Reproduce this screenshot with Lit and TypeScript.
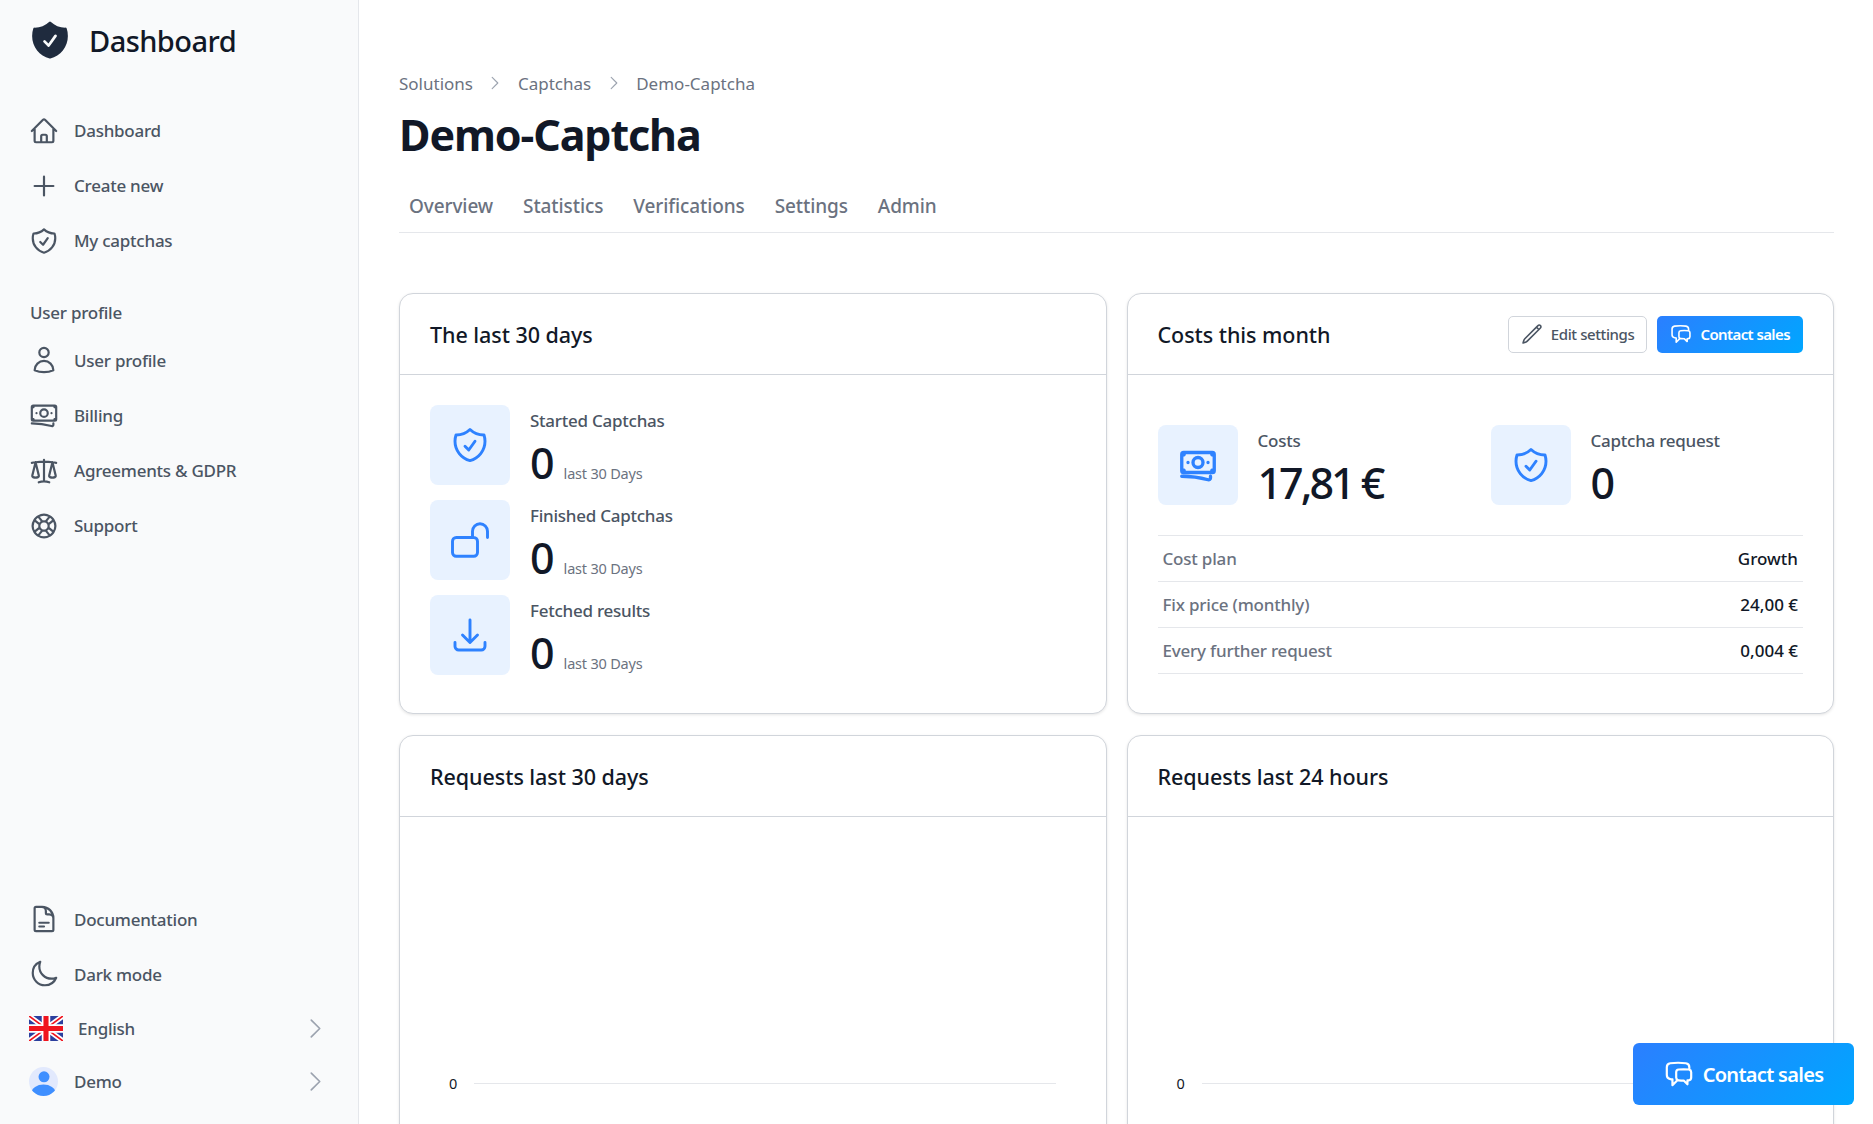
import { LitElement, html, css, svg } from "lit";
import { customElement } from "lit/decorators.js";

const P = {
  home: "M2.25 12l8.954-8.955c.44-.439 1.152-.439 1.591 0L21.75 12M4.5 9.75v10.125c0 .621.504 1.125 1.125 1.125H9.75v-4.875c0-.621.504-1.125 1.125-1.125h2.25c.621 0 1.125.504 1.125 1.125V21h4.125c.621 0 1.125-.504 1.125-1.125V9.75M8.25 21h8.25",
  plus: "M12 4.5v15m7.5-7.5h-15",
  shield: "M9 12.75L11.25 15 15 9.75m-3-7.036A11.959 11.959 0 013.598 6 11.99 11.99 0 003 9.749c0 5.592 3.824 10.29 9 11.623 5.176-1.332 9-6.03 9-11.622 0-1.31-.21-2.571-.598-3.751h-.152c-3.196 0-6.1-1.248-8.25-3.285z",
  user: "M15.75 6a3.75 3.75 0 11-7.5 0 3.75 3.75 0 017.5 0zM4.501 20.118a7.5 7.5 0 0114.998 0A17.933 17.933 0 0112 21.75c-2.676 0-5.216-.584-7.499-1.632z",
  bank: "M2.25 18.75a60.07 60.07 0 0115.797 2.101c.727.198 1.453-.342 1.453-1.096V18.75M3.75 4.5v.75A.75.75 0 013 6h-.75m0 0v-.375c0-.621.504-1.125 1.125-1.125H20.25M2.25 6v9m18-10.5v.75c0 .414.336.75.75.75h.75m-1.5-1.5h.375c.621 0 1.125.504 1.125 1.125v9.75c0 .621-.504 1.125-1.125 1.125h-.375m1.5-1.5H21a.75.75 0 00-.75.75v.75m0 0H3.75m0 0h-.375a1.125 1.125 0 01-1.125-1.125V15m1.5 1.5v-.75A.75.75 0 003 15h-.75M15 10.5a3 3 0 11-6 0 3 3 0 016 0zm3 0h.008v.008H18V10.5zm-12 0h.008v.008H6V10.5z",
  scale: "M12 3v17.25m0 0c-1.472 0-2.882.265-4.185.75M12 20.25c1.472 0 2.882.265 4.185.75M18.75 4.97A48.416 48.416 0 0012 4.5c-2.291 0-4.545.16-6.75.47m13.5 0c1.01.143 2.01.317 3 .52m-3-.52l2.62 10.726c.122.499-.106 1.028-.589 1.202a5.988 5.988 0 01-2.031.352 5.988 5.988 0 01-2.031-.352c-.483-.174-.711-.703-.59-1.202L18.75 4.97zm-16.5.52c.99-.203 1.99-.377 3-.52m0 0l2.62 10.726c.122.499-.106 1.028-.589 1.202a5.989 5.989 0 01-2.031.352 5.989 5.989 0 01-2.031-.352c-.483-.174-.711-.703-.59-1.202L5.25 4.97z",
  buoy: "M16.712 4.33a9.027 9.027 0 011.652 1.306c.51.51.944 1.064 1.306 1.652M16.712 4.33l-3.448 4.138m3.448-4.138a9.014 9.014 0 00-9.424 0M19.67 7.288l-4.138 3.448m4.138-3.448a9.014 9.014 0 010 9.424m-4.138-5.976a3.736 3.736 0 00-.88-1.388 3.737 3.737 0 00-1.388-.88m2.268 2.268a3.765 3.765 0 010 2.528m-2.268-4.796a3.765 3.765 0 00-2.528 0m4.796 4.796c-.181.506-.475.982-.88 1.388a3.736 3.736 0 01-1.388.88m2.268-2.268l4.138 3.448m0 0a9.027 9.027 0 01-1.306 1.652c-.51.51-1.064.944-1.652 1.306m0 0l-3.448-4.138m3.448 4.138a9.014 9.014 0 01-9.424 0m5.976-4.138a3.765 3.765 0 01-2.528 0m0 0a3.736 3.736 0 01-1.388-.88 3.737 3.737 0 01-.88-1.388m2.268 2.268L7.288 19.67m0 0a9.024 9.024 0 01-1.652-1.306 9.027 9.027 0 01-1.306-1.652m0 0l4.138-3.448M4.33 16.712a9.014 9.014 0 010-9.424m4.138 5.976a3.765 3.765 0 010-2.528m0 0c.181-.506.475-.982.88-1.388a3.736 3.736 0 011.388-.88m-2.268 2.268L4.33 7.288m6.406 1.18L7.288 4.33m0 0a9.024 9.024 0 00-1.652 1.306A9.025 9.025 0 004.33 7.288",
  doc: "M19.5 14.25v-2.625a3.375 3.375 0 00-3.375-3.375h-1.5A1.125 1.125 0 0113.5 7.125v-1.5a3.375 3.375 0 00-3.375-3.375H8.25m0 12.75h7.5m-7.5 3H12M10.5 2.25H5.625c-.621 0-1.125.504-1.125 1.125v17.25c0 .621.504 1.125 1.125 1.125h12.75c.621 0 1.125-.504 1.125-1.125V11.25a9 9 0 00-9-9z",
  moon: "M21.752 15.002A9.718 9.718 0 0118 15.75c-5.385 0-9.75-4.365-9.75-9.75 0-1.33.266-2.597.748-3.752A9.753 9.753 0 003 11.25C3 16.635 7.365 21 12.75 21a9.753 9.753 0 009.002-5.998z",
  lock: "M13.5 10.5V6.75a4.5 4.5 0 119 0v3.75M3.75 21.75h10.5a2.25 2.25 0 002.25-2.25v-6.75a2.25 2.25 0 00-2.25-2.25H3.75a2.25 2.25 0 00-2.25 2.25v6.75a2.25 2.25 0 002.25 2.25z",
  tray: "M3 16.5v2.25A2.25 2.25 0 005.25 21h13.5A2.25 2.25 0 0021 18.75V16.5M16.5 12L12 16.5m0 0L7.5 12m4.5 4.5V3",
  pencil: "M16.862 4.487l1.687-1.688a1.875 1.875 0 112.652 2.652L6.832 19.82a4.5 4.5 0 01-1.897 1.13l-2.685.8.8-2.685a4.5 4.5 0 011.13-1.897L16.863 4.487zm0 0L19.5 7.125",
  chat: "M20.25 8.511c.884.284 1.5 1.128 1.5 2.097v4.286c0 1.136-.847 2.1-1.98 2.193-.34.027-.68.052-1.02.072v3.091l-3-3c-1.354 0-2.694-.055-4.02-.163a2.115 2.115 0 01-.825-.242m9.345-8.334a2.126 2.126 0 00-.476-.095 48.64 48.64 0 00-8.048 0c-1.131.094-1.976 1.057-1.976 2.192v4.286c0 .837.46 1.58 1.155 1.951m9.345-8.334V6.637c0-1.621-1.152-3.026-2.76-3.235A48.455 48.455 0 0011.25 3c-2.115 0-4.198.137-6.24.402-1.608.209-2.76 1.614-2.76 3.235v6.226c0 1.621 1.152 3.026 2.76 3.235.577.075 1.157.14 1.74.194V21l4.155-4.155",
  chev: "M8.25 4.5l7.5 7.5-7.5 7.5",
};

const icon = (d: string, cls = "") => html`<svg class="ic ${cls}" viewBox="0 0 24 24" fill="none" stroke="currentColor" stroke-width="1.5" stroke-linecap="round" stroke-linejoin="round"><path d=${d}></path></svg>`;

const flag = html`<svg class="flag" viewBox="0 0 60 44" preserveAspectRatio="none">
  <rect width="60" height="44" fill="#2b3f9e"></rect>
  <path d="M0 0L60 44M60 0L0 44" stroke="#fff" stroke-width="9"></path>
  <path d="M0 0L60 44M60 0L0 44" stroke="#f0141e" stroke-width="3"></path>
  <path d="M30 0V44M0 22H60" stroke="#fff" stroke-width="15"></path>
  <path d="M30 0V44M0 22H60" stroke="#f0141e" stroke-width="9"></path>
</svg>`;

const avatar = html`<svg class="avatar" viewBox="0 0 28 28">
  <defs><clipPath id="av"><circle cx="14" cy="14" r="14"></circle></clipPath></defs>
  <circle cx="14" cy="14" r="14" fill="#e2e9fd"></circle>
  <g clip-path="url(#av)" fill="#3f8fff"><circle cx="14.5" cy="9.5" r="5.3"></circle><ellipse cx="14" cy="24.5" rx="11.5" ry="7.5"></ellipse></g>
</svg>`;

const SOLID_SHIELD = svg`<path fill-rule="evenodd" clip-rule="evenodd" d="M12.516 2.17a.75.75 0 00-1.032 0 11.209 11.209 0 01-7.877 3.08.75.75 0 00-.722.515A12.74 12.74 0 002.25 9.75c0 5.942 4.064 10.933 9.563 12.348a.749.749 0 00.374 0c5.499-1.415 9.563-6.406 9.563-12.348 0-1.39-.223-2.73-.635-3.985a.75.75 0 00-.722-.516l-.143.001c-2.996 0-5.717-1.17-7.734-3.08zm3.094 8.016a.75.75 0 10-1.22-.872l-3.236 4.53L9.53 12.22a.75.75 0 00-1.06 1.06l2.25 2.25a.75.75 0 001.14-.094l3.75-5.25z"></path>`;

@customElement("app-root")
export class AppRoot extends LitElement {
  static styles = css`
    :host { display: flex; height: 1124px; overflow: hidden; background: #fff; font-family: "Noto Sans", "Open Sans", sans-serif; color: #4b5563; position: relative; }
    * { box-sizing: border-box; }
    .ic { display: block; flex: none; width: 30px; height: 30px; stroke-width: 1.75; }
    aside { flex: none; width: 359px; height: 100%; background: #f9fafb; border-right: 1px solid #e5e7eb; display: flex; flex-direction: column; padding-bottom: 16px; }
    .brand { display: flex; align-items: center; gap: 17px; padding: 6px 0 0 28px; height: 82px; margin-bottom: 21px; font-size: 29px; font-weight: 500; color: #111827; letter-spacing: -0.55px; }
    .brand svg { width: 44px; height: 44px; flex: none; fill: #1f2b3e; margin-top: -8px; }
    .brand span { margin-top: -8px; }
    .nav { display: flex; align-items: center; gap: 15px; height: 55.2px; padding-left: 29px; font-size: 17px; font-weight: 500; letter-spacing: -0.25px; }
    .label { font-size: 17px; font-weight: 500; letter-spacing: -0.25px; padding: 31px 0 0 30px; height: 72px; margin-bottom: -8px; line-height: 26px; }
    .spacer { flex: 1; }
    .foot { display: flex; align-items: center; height: 53px; padding-left: 29px; padding-right: 29px; font-size: 17px; font-weight: 500; letter-spacing: -0.25px; }
    .foot .ic { width: 27px; height: 27px; color: #9ca3af; margin-left: auto; stroke-width: 1.5; }
    .flag { width: 34px; height: 25px; flex: none; margin-right: 15px; }
    .avatar { width: 29px; height: 29px; flex: none; margin-right: 16px; }
    main { flex: 1; min-width: 0; padding: 69px 39px 0 40px; }
    .crumbs { display: flex; align-items: center; height: 28px; font-size: 17px; color: #6b7280; letter-spacing: 0; }
    .crumbs .ic { width: 18px; height: 18px; margin: 0 13.5px; color: #9ca3af; stroke-width: 1.5; }
    h1 { margin: 0; height: 74px; display: flex; align-items: center; font-size: 43px; font-weight: 700; color: #111827; letter-spacing: -1.1px; }
    .tabs { display: flex; gap: 30px; height: 53px; margin-top: 9px; padding: 0 10px; border-bottom: 1px solid #e5e7eb; margin-bottom: 60px; align-items: center; font-size: 19px; font-weight: 500; color: #6b7280; letter-spacing: -0.1px; }
    .grid { display: grid; grid-template-columns: 1fr 1fr; gap: 21px 20px; }
    .card { background: #fff; border: 1px solid #d1d5db; border-radius: 14px; box-shadow: 0 1px 3px rgba(0,0,0,.1); }
    .card.top { height: 421px; }
    .card.chart { height: 500px; }
    .head { height: 81px; border-bottom: 1px solid #d1d5db; padding: 0 30px; display: flex; align-items: center; justify-content: space-between; font-size: 21.5px; font-weight: 500; color: #111827; letter-spacing: -0.05px; }
    .rows { padding: 30px 30px 0; display: flex; flex-direction: column; gap: 15px; }
    .row { display: flex; gap: 20px; height: 80px; }
    .box { flex: none; width: 80px; height: 80px; background: #e8f2ff; border-radius: 8px; display: flex; align-items: center; justify-content: center; color: #2e82ff; }
    .box .ic { width: 40px; height: 40px; }
    .box .heavy { stroke-width: 2; }
    .name { font-size: 17px; font-weight: 500; line-height: 26px; color: #4b5563; letter-spacing: -0.25px; height: 26px; margin-top: 3px; white-space: nowrap; }
    .val { display: flex; align-items: baseline; gap: 10px; font-size: 43px; line-height: 50px; font-weight: 500; color: #111827; letter-spacing: -1px; margin-top: 4px; }
    .val.cost { letter-spacing: -3px; }
    .val small { font-size: 14.5px; font-weight: 400; color: #6b7280; letter-spacing: -0.2px; }
    .btns { display: flex; gap: 10px; }
    .btn { display: flex; align-items: center; gap: 8px; height: 37px; border-radius: 5px; font-size: 15px; font-weight: 500; padding: 0 12px; letter-spacing: -0.4px; }
    .btn .ic { width: 22px; height: 22px; }
    .ghost { border: 1px solid #d1d5db; color: #4b5563; }
    .blue { background: linear-gradient(135deg, #2b7fff, #00a6ff); color: #fff; font-weight: 600; letter-spacing: -0.6px; padding: 0 13px; }
    .stats { display: grid; grid-template-columns: 333px 1fr; padding: 50px 30px 0; }
    .stat { display: flex; gap: 20px; height: 80px; }
    .table { margin: 30px 30px 0; border-top: 1px solid #e5e7eb; font-size: 17px; letter-spacing: -0.2px; }
    .tr { display: flex; justify-content: space-between; align-items: center; height: 46px; border-bottom: 1px solid #e5e7eb; padding: 0 5px; color: #6b7280; font-weight: 500; }
    .tr b { font-weight: 500; color: #111827; letter-spacing: 0; }
    .plot { height: 418px; display: flex; align-items: flex-end; padding: 0 50px 0 49px; gap: 17px; font-size: 14.5px; color: #111827; }
    .plot span { height: 20px; line-height: 20px; position: relative; top: -142px; }
    .plot i { flex: 1; height: 1px; background: #e5e7eb; position: relative; top: -151px; }
    .fab { position: absolute; right: 19px; bottom: 19px; width: 221px; height: 62px; border-radius: 6px; display: flex; align-items: center; justify-content: center; gap: 9px; background: linear-gradient(135deg, #2b7fff, #00a6ff); color: #fff; font-size: 20px; font-weight: 600; letter-spacing: -0.7px; }
    .fab .ic { width: 30px; height: 30px; }
  `;

  render() {
    const nav = (d: string, t: string) => html`<div class="nav">${icon(d)}<span>${t}</span></div>`;
    const row = (d: string, n: string) => html`<div class="row"><div class="box">${icon(d)}</div><div><div class="name">${n}</div><div class="val">0<small>last 30 Days</small></div></div></div>`;
    const chart = (t: string) => html`<section class="card chart"><div class="head">${t}</div><div class="plot"><span>0</span><i></i></div></section>`;
    return html`
      <aside>
        <div class="brand"><svg viewBox="0 0 24 24">${SOLID_SHIELD}</svg><span>Dashboard</span></div>
        ${nav(P.home, "Dashboard")}${nav(P.plus, "Create new")}${nav(P.shield, "My captchas")}
        <div class="label">User profile</div>
        ${nav(P.user, "User profile")}${nav(P.bank, "Billing")}${nav(P.scale, "Agreements & GDPR")}${nav(P.buoy, "Support")}
        <div class="spacer"></div>
        ${nav(P.doc, "Documentation")}${nav(P.moon, "Dark mode")}
        <div class="foot">${flag}<span>English</span>${icon(P.chev)}</div>
        <div class="foot">${avatar}<span>Demo</span>${icon(P.chev)}</div>
      </aside>
      <main>
        <div class="crumbs"><span>Solutions</span>${icon(P.chev)}<span>Captchas</span>${icon(P.chev)}<span>Demo-Captcha</span></div>
        <h1>Demo-Captcha</h1>
        <div class="tabs"><span>Overview</span><span>Statistics</span><span>Verifications</span><span>Settings</span><span>Admin</span></div>
        <div class="grid">
          <section class="card top">
            <div class="head">The last 30 days</div>
            <div class="rows">${row(P.shield, "Started Captchas")}${row(P.lock, "Finished Captchas")}${row(P.tray, "Fetched results")}</div>
          </section>
          <section class="card top">
            <div class="head">Costs this month
              <div class="btns">
                <div class="btn ghost">${icon(P.pencil)}<span>Edit settings</span></div>
                <div class="btn blue">${icon(P.chat)}<span>Contact sales</span></div>
              </div>
            </div>
            <div class="stats">
              <div class="stat"><div class="box">${icon(P.bank, "heavy")}</div><div><div class="name">Costs</div><div class="val cost">17,81 €</div></div></div>
              <div class="stat"><div class="box">${icon(P.shield)}</div><div><div class="name">Captcha request</div><div class="val">0</div></div></div>
            </div>
            <div class="table">
              <div class="tr"><span>Cost plan</span><b>Growth</b></div>
              <div class="tr"><span>Fix price (monthly)</span><b>24,00 €</b></div>
              <div class="tr"><span>Every further request</span><b>0,004 €</b></div>
            </div>
          </section>
          ${chart("Requests last 30 days")}${chart("Requests last 24 hours")}
        </div>
      </main>
      <div class="fab">${icon(P.chat)}<span>Contact sales</span></div>
    `;
  }
}
